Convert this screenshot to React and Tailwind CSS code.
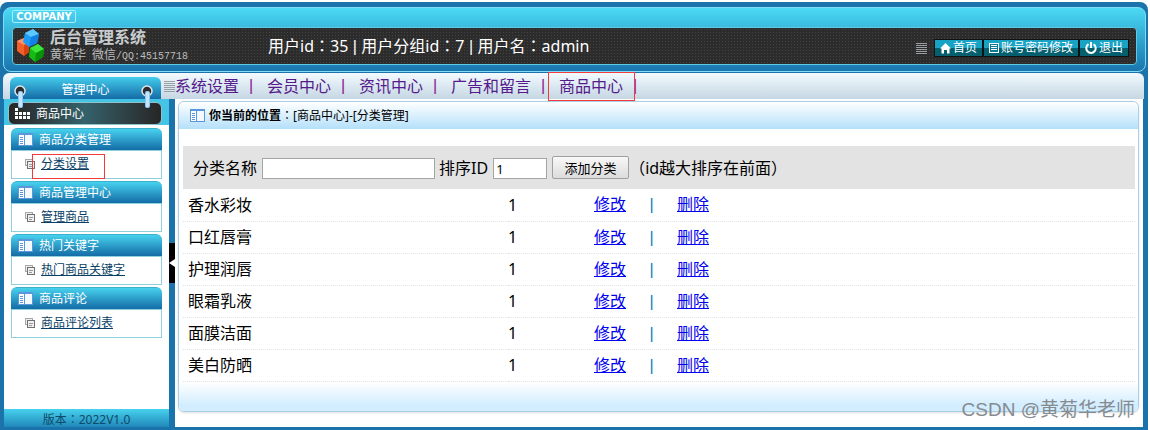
import React, { useState } from 'react';

// --- Navigation and table data ---
const topMenu = ['系统设置', '会员中心', '资讯中心', '广告和留言', '商品中心'];

const sideMenu = [
  { title: '商品分类管理', link: '分类设置' },
  { title: '商品管理中心', link: '管理商品' },
  { title: '热门关键字', link: '热门商品关键字' },
  { title: '商品评论', link: '商品评论列表' },
];

const categories = ['香水彩妆', '口红唇膏', '护理润唇', '眼霜乳液', '面膜洁面', '美白防晒'];

// --- Icons ---
const CubesLogo = () => (
  <svg viewBox="0 0 28 34" className="h-[34px] w-7 shrink-0" aria-hidden="true">
    <path d="M1 12l7-3 5 5v9l-5 4-7-5z" fill="#f4602c" />
    <path d="M1 12l7-3 5 5-5 2z" fill="#ff9468" />
    <path d="M8 16l5-2v9l-5 4z" fill="#d8420e" />
    <path d="M9 4l8-4 6 5-2 9-8 4-6-5z" fill="#1c9cf4" />
    <path d="M9 4l8-4 6 5-8 3z" fill="#5cc8ff" />
    <path d="M15 8l8-3-2 9-8 4z" fill="#1280e4" />
    <path d="M14 19l8-4 6 5-1 8-8 5-6-5z" fill="#12bc12" />
    <path d="M14 19l8-4 6 5-8 4z" fill="#3ce43c" />
    <path d="M20 24l8-4-1 8-8 5z" fill="#089208" />
  </svg>
);

const PanelIcon = () => (
  <svg viewBox="0 0 15 13" className="h-[13px] w-[15px] shrink-0" shapeRendering="crispEdges" aria-hidden="true">
    <rect width="15" height="13" fill="#5a96dc" />
    <rect x="1" y="2" width="5" height="10" fill="#fff" />
    <rect x="7" y="2" width="7" height="10" fill="#f4f9ff" />
    <path d="M2 4h3v1H2zM2 6h3v1H2zM2 8h3v1H2zM2 10h3v1H2z" fill="#5a96dc" />
  </svg>
);

const CopyIcon = () => (
  <svg viewBox="0 0 10 10" className="h-[10px] w-[10px] shrink-0" shapeRendering="crispEdges" aria-hidden="true">
    <path d="M0 0h8v7H0z" fill="#a8a8a8" />
    <path d="M1 1h6v5H1z" fill="#eee" />
    <path d="M2 2h8v8H2z" fill="#707070" />
    <path d="M3 3h6v6H3z" fill="#f0f0f0" />
    <path d="M4 5h4v1H4zM4 7h3v1H4z" fill="#999" />
  </svg>
);

const GridIcon = () => (
  <svg viewBox="0 0 15 11" className="h-[11px] w-[15px] shrink-0" shapeRendering="crispEdges" fill="#fff" aria-hidden="true">
    <path d="M0 0h3v3H0zM0 4h3v3H0zM4 4h3v3H4zM8 4h3v3H8zM12 4h3v3h-3zM0 8h3v3H0zM4 8h3v3H4zM8 8h3v3H8zM12 8h3v3h-3z" />
  </svg>
);

const LinesIcon = () => (
  <svg viewBox="0 0 11 13" className="h-[13px] w-[11px] shrink-0" shapeRendering="crispEdges" fill="#9a9fa3" aria-hidden="true">
    <path d="M0 1h11v1H0zM0 3h11v1H0zM0 5h11v1H0zM0 7h11v1H0zM0 9h11v1H0zM0 11h11v1H0z" />
  </svg>
);

const HomeIcon = () => (
  <svg viewBox="0 0 11 11" className="h-[11px] w-[11px]" fill="#fff" aria-hidden="true">
    <path d="M5.500 0L11 5.500H9.500V10.500H7V7H4v3.500H1.500v-5H0L5.500 0z" />
  </svg>
);

const ListIcon = () => (
  <svg viewBox="0 0 10 10" className="h-[10px] w-[10px]" shapeRendering="crispEdges" aria-hidden="true">
    <path d="M0 0h10v10H0z" fill="#fff" />
    <path d="M1 1h8v8H1z" fill="#0c7c92" />
    <path d="M2 2h6v1H2zM2 4h6v1H2zM2 6h6v1H2z" fill="#fff" />
  </svg>
);

const PowerIcon = () => (
  <svg viewBox="0 0 12 12" className="h-3 w-3" fill="none" stroke="#fff" strokeWidth="2" aria-hidden="true">
    <path d="M3.500 2.200a4.700 4.700 0 1 0 5 0M6 0v6" />
  </svg>
);

// Hook that pins the sidebar tab to the bar below it
const Ring = () => (
  <svg viewBox="0 0 12 24" className="h-6 w-3" aria-hidden="true">
    <circle cx="6" cy="6" r="5" fill="#2c2c2c" stroke="#dfe6ea" strokeWidth="1.500" />
    <rect x="4" y="6" width="5" height="17" rx="2" fill="#90c8f4" />
    <rect x="5" y="7" width="3" height="15" rx="1" fill="#c4e4ff" />
  </svg>
);

// Full-width punctuation, centred in its cell
const Mark = ({ children }) => <span className="font-['Noto_Sans_CJK_TC',sans-serif]">{children}</span>;

const Pipe = () => <span className="font-['Liberation_Sans',sans-serif]"> | </span>;

const HeaderButton = ({ icon, label }) => (
  <button type="button" className="flex h-4 items-center gap-0.5 bg-linear-to-b from-[#18a2c4] from-50% to-[#04606f] to-50% px-[5px] text-xs leading-4 text-white outline outline-[#111]">
    {icon}
    {label}
  </button>
);

const Header = () => (
  <header className="mt-[5px] mr-0.5 ml-[-1px] rounded-lg border border-[#7fdcf4] bg-linear-to-b from-[#4bdaf5] to-[#1a75ae] px-2 pt-0.5 pb-1.5 text-white">
    <div className="flex h-[17px] items-start">
      <span className="flex h-[13px] w-16 items-center justify-center rounded-xs border border-[#a5eefb] font-['DejaVu_Sans',sans-serif] text-[10px] font-bold">
        COMPANY
      </span>
    </div>
    <div className="flex h-[38px] items-center rounded-sm border border-[#5ccbe4] bg-[#2c2c2c] bg-[radial-gradient(#444_1px,transparent_1px)] bg-size-[3px_3px] pr-2 pl-[3px]">
      <CubesLogo />
      <div className="ml-1.5 w-[218px]">
        <h1 className="text-base leading-5 font-bold text-[#c8cccf]">后台管理系统</h1>
        <p className="text-xs leading-4 text-[#bcbcbc]">
          黄菊华<span className="font-['Liberation_Mono',monospace] text-[10px]"> </span>
          微信<span className="font-['Liberation_Mono',monospace] text-[10px]">/QQ:45157718</span>
        </p>
      </div>
      <p className="flex-1 text-base leading-5">
        用户id<Mark>：</Mark>35<Pipe />用户分组id<Mark>：</Mark>7<Pipe />用户名<Mark>：</Mark>admin
      </p>
      <div className="mt-1 flex items-center gap-0.5">
        <span className="mr-1.5"><LinesIcon /></span>
        <HeaderButton icon={<HomeIcon />} label="首页" />
        <HeaderButton icon={<ListIcon />} label="账号密码修改" />
        <HeaderButton icon={<PowerIcon />} label="退出" />
      </div>
    </div>
  </header>
);

const TopNav = () => (
  <div className="mt-px mr-1 ml-[-1px] flex h-[26px] rounded-t-md bg-linear-to-b from-[#f2faff] to-[#c6d7e3]">
    <div className="flex w-[161px] shrink-0 items-end pl-[7px]">
      <div className="relative h-[22px] w-[151px] rounded-t-md bg-linear-to-b from-[#45cdec] to-[#146ca6] text-center text-xs leading-[26px] text-white">
        管理中心
        <span className="absolute top-2 left-1"><Ring /></span>
        <span className="absolute top-2 right-2"><Ring /></span>
      </div>
    </div>
    <nav className="flex items-center text-base leading-[26px] text-[#551a8b]">
      <LinesIcon />
      {topMenu.map((item) => (
        <React.Fragment key={item}>
          <a href="#" className="relative whitespace-nowrap">
            {item}
            {item === '商品中心' && (
              <span className="absolute -top-px -right-3 -left-[11px] h-[29px] border border-[#f43b3b]" />
            )}
          </a>
          <span className="w-7 pl-2.5 font-['Liberation_Sans',sans-serif] text-[#8b1a8b]">|</span>
        </React.Fragment>
      ))}
    </nav>
  </div>
);

const Sidebar = () => (
  <aside className="flex w-[165px] shrink-0 flex-col bg-white">
    <div className="bg-[#45c5e5] pt-[3px] pr-[7px] pl-1">
      <div className="flex h-[23px] items-center gap-1.5 rounded-md border border-[#8fc0cc] bg-linear-to-r from-[#262626] via-[#34626c] to-[#262626] pl-1.5 text-xs text-white">
        <GridIcon />
        商品中心
      </div>
    </div>
    <div className="flex flex-1 flex-col gap-0.5 px-[7px] pt-[3px]">
      {sideMenu.map((group, index) => (
        <section key={group.title}>
          <h2 className="flex h-[22px] items-center gap-1.5 rounded-t-md border-t border-[#3bb0cc] bg-linear-to-b from-[#48d2ee] to-[#146ca6] pl-[7px] text-xs text-white">
            <PanelIcon />
            {group.title}
          </h2>
          <div className="relative flex h-[29px] items-center gap-1.5 border border-[#8fd0de] pb-0.5 pl-[13px]">
            <CopyIcon />
            <a href="#" className="text-xs text-[#0a3f66] underline">{group.link}</a>
            {index === 0 && (
              <span className="absolute top-[3px] left-5 h-[25px] w-[73px] border border-[#f43b3b]" />
            )}
          </div>
        </section>
      ))}
    </div>
    <div className="h-[18px] bg-linear-to-b from-[#48d2ee] to-[#2088ba] text-center text-xs leading-5 text-[#0f4a68]">
      版本<Mark>：</Mark>2022V1.0
    </div>
  </aside>
);

const CategoryForm = () => {
  const [name, setName] = useState('');
  const [sort, setSort] = useState('1');

  return (
    <form onSubmit={(e) => e.preventDefault()} className="mt-[17px] flex h-[43px] items-center bg-[#e3e3e3] px-2.5 text-base">
      <label htmlFor="name" className="mr-[5px]">分类名称</label>
      <input
        id="name"
        value={name}
        onChange={(e) => setName(e.target.value)}
        className="mt-0.5 mr-1 h-[21px] w-[173px] border border-[#a5a5a5] bg-white px-0.5 text-[13px]"
      />
      <label htmlFor="sort" className="mr-[5px]">排序ID</label>
      <input
        id="sort"
        value={sort}
        onChange={(e) => setSort(e.target.value)}
        className="mt-0.5 mr-[5px] h-[21px] w-[54px] border border-[#a5a5a5] bg-white px-0.5 text-[13px]"
      />
      <button type="submit" className="h-[23px] w-[77px] rounded-xs border border-[#a0a0a0] bg-linear-to-b from-[#f8f8f8] to-[#dcdcdc] text-[13px] leading-5">
        添加分类
      </button>
      <span><Mark>（</Mark>id越大排序在前面<Mark>）</Mark></span>
    </form>
  );
};

const CategoryTable = () => (
  <table className="w-full table-fixed text-base">
    <tbody>
      {categories.map((category) => (
        <tr key={category} className="h-8 border-b border-dotted border-[#e4e4e4]">
          <td className="w-[325px] pl-[5px]">{category}</td>
          <td className="w-[86px]">1</td>
          <td>
            <a href="#" className="text-[#0000ee] underline">修改</a>
            <span className="inline-block w-[51px] text-center font-['Liberation_Sans',sans-serif] text-[#0a7fb8]">|</span>
            <a href="#" className="text-[#0000ee] underline">删除</a>
          </td>
        </tr>
      ))}
    </tbody>
  </table>
);

const App = () => {
  return (
    <div className="relative flex min-h-screen flex-col bg-white pt-0.5 pr-0.5 font-['Noto_Sans','Noto_Sans_CJK_SC',sans-serif]">
      <div className="flex flex-1 flex-col rounded-t-lg bg-[#1a73aa] pb-[3px] pl-1">
        <Header />
        <TopNav />
        <div className="flex flex-1">
          <Sidebar />
          <div className="flex w-1.5 shrink-0 items-center">
            <button type="button" aria-label="收起菜单" className="flex h-10 w-1.5 items-center bg-black">
              <svg viewBox="0 0 6 8" className="h-2 w-1.5" aria-hidden="true">
                <path d="M6 0v8L0 4z" fill="#fff" />
              </svg>
            </button>
          </div>
          <main className="mr-[5px] flex-1 bg-white pt-0.5 pr-1 pl-[3px] text-black">
            <div className="rounded-md border border-[#a9cfe6] shadow-sm">
              <div className="flex h-[27px] items-center gap-1 rounded-t-md bg-linear-to-b from-white to-[#b4e0fa] pl-[11px] text-xs">
                <PanelIcon />
                <p><strong>你当前的位置</strong><Mark>：</Mark>[商品中心]-[分类管理]</p>
              </div>
              <div className="pr-[3px] pl-1">
                <CategoryForm />
                <CategoryTable />
              </div>
              <div className="h-[29px] rounded-b-md bg-linear-to-b from-white to-[#d2edff] to-80%" />
            </div>
          </main>
        </div>
      </div>
      <p className="absolute right-[15px] bottom-1 font-['Liberation_Sans','Noto_Sans_CJK_SC',sans-serif] text-[19px] leading-8 text-[#858b90]">
        CSDN @黄菊华老师
      </p>
    </div>
  );
};

export default App;
